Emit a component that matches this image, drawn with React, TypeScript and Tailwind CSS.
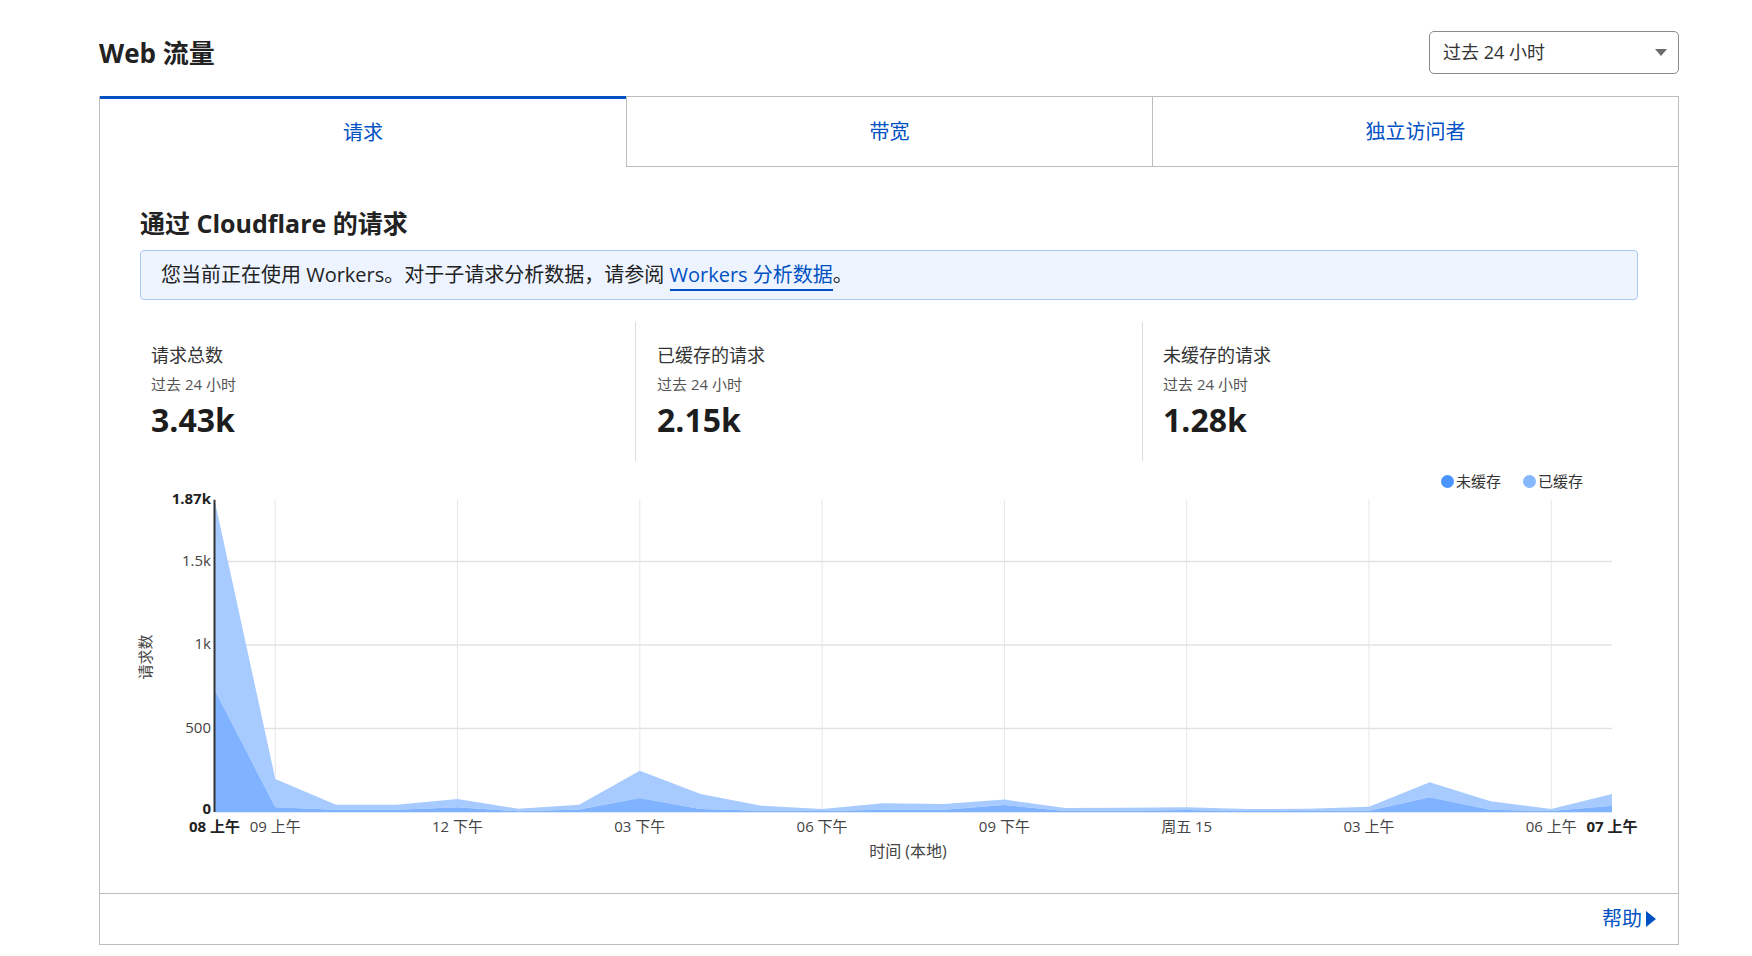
import React from "react";

const total = [1870, 198, 44, 44, 78, 20, 44, 247, 108, 38, 18, 52, 48, 74, 24, 26, 28, 18, 20, 32, 178, 64, 18, 108];
const uncached = [734, 28, 14, 14, 28, 5, 15, 84, 18, 8, 6, 14, 14, 42, 6, 8, 12, 6, 6, 8, 88, 14, 6, 38];

const X0 = 74.5;
const X1 = 1472;
const STEP = (X1 - X0) / 23;
const Y0 = 320;
const K = 83.5 / 500;
const xf = (i: number) => X0 + i * STEP;
const yf = (v: number) => Y0 - v * K;

function areaPath(top: number[], bottom: number[] | null) {
  const up = top.map((v, i) => `${xf(i).toFixed(1)},${yf(v).toFixed(1)}`);
  const down = bottom
    ? bottom.map((v, i) => `${xf(i).toFixed(1)},${yf(v).toFixed(1)}`).reverse()
    : [`${xf(23).toFixed(1)},${Y0}`, `${xf(0).toFixed(1)},${Y0}`];
  return `M${up.join(" L")} L${down.join(" L")} Z`;
}

const xTicks: { i: number; label: string; bold?: boolean }[] = [
  { i: 0, label: "08 上午", bold: true },
  { i: 1, label: "09 上午" },
  { i: 4, label: "12 下午" },
  { i: 7, label: "03 下午" },
  { i: 10, label: "06 下午" },
  { i: 13, label: "09 下午" },
  { i: 16, label: "周五 15" },
  { i: 19, label: "03 上午" },
  { i: 22, label: "06 上午" },
  { i: 23, label: "07 上午", bold: true },
];

function Chart() {
  const font = "'Open Sans','Noto Sans CJK SC',sans-serif";
  return (
    <svg width="1508" height="390" viewBox="0 0 1508 390" className="ml-[-10px]" style={{ fontFamily: font }}>
      <g transform="translate(10,12)">
        {[500, 1000, 1500].map((v) => (
          <line key={v} x1={X0} x2={X1} y1={yf(v)} y2={yf(v)} stroke="#e3e3e3" strokeWidth="1.5" />
        ))}
        {xTicks
          .filter((t) => t.i !== 0 && t.i !== 23)
          .map((t) => (
            <line key={t.i} x1={xf(t.i)} x2={xf(t.i)} y1={yf(1870)} y2={Y0} stroke="#e6e6e6" strokeWidth="1" />
          ))}
        <path d={areaPath(total, uncached)} fill="#a7cbff" />
        <path d={areaPath(uncached, null)} fill="#80b3ff" />
        <line x1={X0} x2={X1} y1={Y0 + 0.5} y2={Y0 + 0.5} stroke="#dce8fb" strokeWidth="1" />
        <line x1={X0} x2={X0} y1={yf(1870)} y2={Y0} stroke="#333" strokeWidth="2" />
        {[
          { v: 1870, t: "1.87k", b: true },
          { v: 1500, t: "1.5k" },
          { v: 1000, t: "1k" },
          { v: 500, t: "500" },
          { v: 0, t: "0", b: true },
        ].map((l) => (
          <text
            key={l.t}
            x={71}
            y={l.v === 0 ? yf(l.v) - 2 : yf(l.v)}
            textAnchor="end"
            dominantBaseline="middle"
            fontSize="15"
            fontWeight={l.b ? 700 : 400}
            fill={l.b ? "#222" : "#444"}
          >
            {l.t}
          </text>
        ))}
        {xTicks.map((t) => (
          <text
            key={t.label}
            x={xf(t.i)}
            y={336}
            textAnchor="middle"
            dominantBaseline="middle"
            fontSize="15"
            fontWeight={t.bold ? 700 : 400}
            fill={t.bold ? "#222" : "#444"}
          >
            {t.label}
          </text>
        ))}
        <text x={768} y={361} textAnchor="middle" dominantBaseline="middle" fontSize="16" fill="#444">
          时间 (本地)
        </text>
        <text
          transform="translate(7,165) rotate(-90)"
          textAnchor="middle"
          dominantBaseline="middle"
          fontSize="15"
          fill="#444"
        >
          请求数
        </text>
      </g>
    </svg>
  );
}

function Stat({ label, value, cls }: { label: string; value: string; cls: string }) {
  return (
    <div className={cls}>
      <div className="text-[18px] leading-[26px] text-[#333]">{label}</div>
      <div className="mt-[6px] text-[15px] leading-[20px] text-[#555]">过去 24 小时</div>
      <div className="mt-[6px] text-[32px] leading-[40px] font-bold text-[#1d1d1d]">{value}</div>
    </div>
  );
}

export default function App() {
  return (
    <div className="w-[1752px] h-[956px] bg-white font-['Open_Sans','Noto_Sans_CJK_SC',sans-serif] text-[#222]">
      <div className="ml-[99px] w-[1580px] pt-[31px]">
        <div className="flex items-center justify-between h-[43px] mb-[22px]">
          <h1 className="text-[26px] font-bold text-[#222] leading-[32px]">Web 流量</h1>
          <div className="w-[250px] h-[43px] border border-[#8a8a8a] rounded-[5px] flex items-center justify-between pl-[13px] pr-[11px]">
            <span className="text-[18px] text-[#333]">过去 24 小时</span>
            <svg width="12" height="7" viewBox="0 0 12 7">
              <path d="M0 0 L12 0 L6 7 Z" fill="#6b6b6b" />
            </svg>
          </div>
        </div>

        <div className="border-l border-r border-b border-[#bdbdbd]">
          <div className="grid grid-cols-3 h-[71px]">
            <div className="border-t-[3px] border-[#0051c3] flex items-center justify-center text-[20px] text-[#0051c3]">
              请求
            </div>
            <div className="border-t border-b border-l border-[#bdbdbd] flex items-center justify-center text-[20px] text-[#0051c3]">
              带宽
            </div>
            <div className="border-t border-b border-l border-[#bdbdbd] flex items-center justify-center text-[20px] text-[#0051c3]">
              独立访问者
            </div>
          </div>

          <div className="px-[40px] pt-[40px] pb-[23px]">
            <h2 className="text-[25px] leading-[32px] font-bold text-[#222]">通过 Cloudflare 的请求</h2>
            <div className="mt-[11px] h-[50px] border border-[#a9c9f5] bg-[#edf4ff] rounded-[4px] flex items-center pl-[20px] text-[20px] text-[#222]">
              <span>
                您当前正在使用 Workers。对于子请求分析数据，请参阅{" "}
                <a className="text-[#0051c3] border-b-2 border-[#0051c3] pb-[1px]">Workers 分析数据</a>。
              </span>
            </div>

            <div className="mt-[22px] grid grid-cols-[495px_507px_1fr] h-[139px]">
              <Stat label="请求总数" value="3.43k" cls="pl-[11px] pt-[20px]" />
              <Stat label="已缓存的请求" value="2.15k" cls="border-l border-[#dddddd] pl-[21px] pt-[20px]" />
              <Stat label="未缓存的请求" value="1.28k" cls="border-l border-[#dddddd] pl-[20px] pt-[20px]" />
            </div>

            <div className="mt-[9px] mb-[-12px] h-[22px] flex items-center justify-end pr-[55px] text-[15px] text-[#333] relative">
              <div className="flex items-center gap-[2px]">
                <span className="w-[13px] h-[13px] rounded-full bg-[#4a94ff]" />
                <span>未缓存</span>
              </div>
              <div className="flex items-center gap-[2px] ml-[22px]">
                <span className="w-[13px] h-[13px] rounded-full bg-[#86b8ff]" />
                <span>已缓存</span>
              </div>
            </div>
            <Chart />
          </div>

          <div className="border-t border-[#bdbdbd] h-[51px] flex items-center justify-end pr-[22px]">
            <a className="flex items-center gap-[4px] text-[20px] text-[#0051c3]">
              帮助
              <svg width="10" height="16" viewBox="0 0 10 16">
                <path d="M0 0 L10 8 L0 16 Z" fill="#0051c3" />
              </svg>
            </a>
          </div>
        </div>
      </div>
    </div>
  );
}
